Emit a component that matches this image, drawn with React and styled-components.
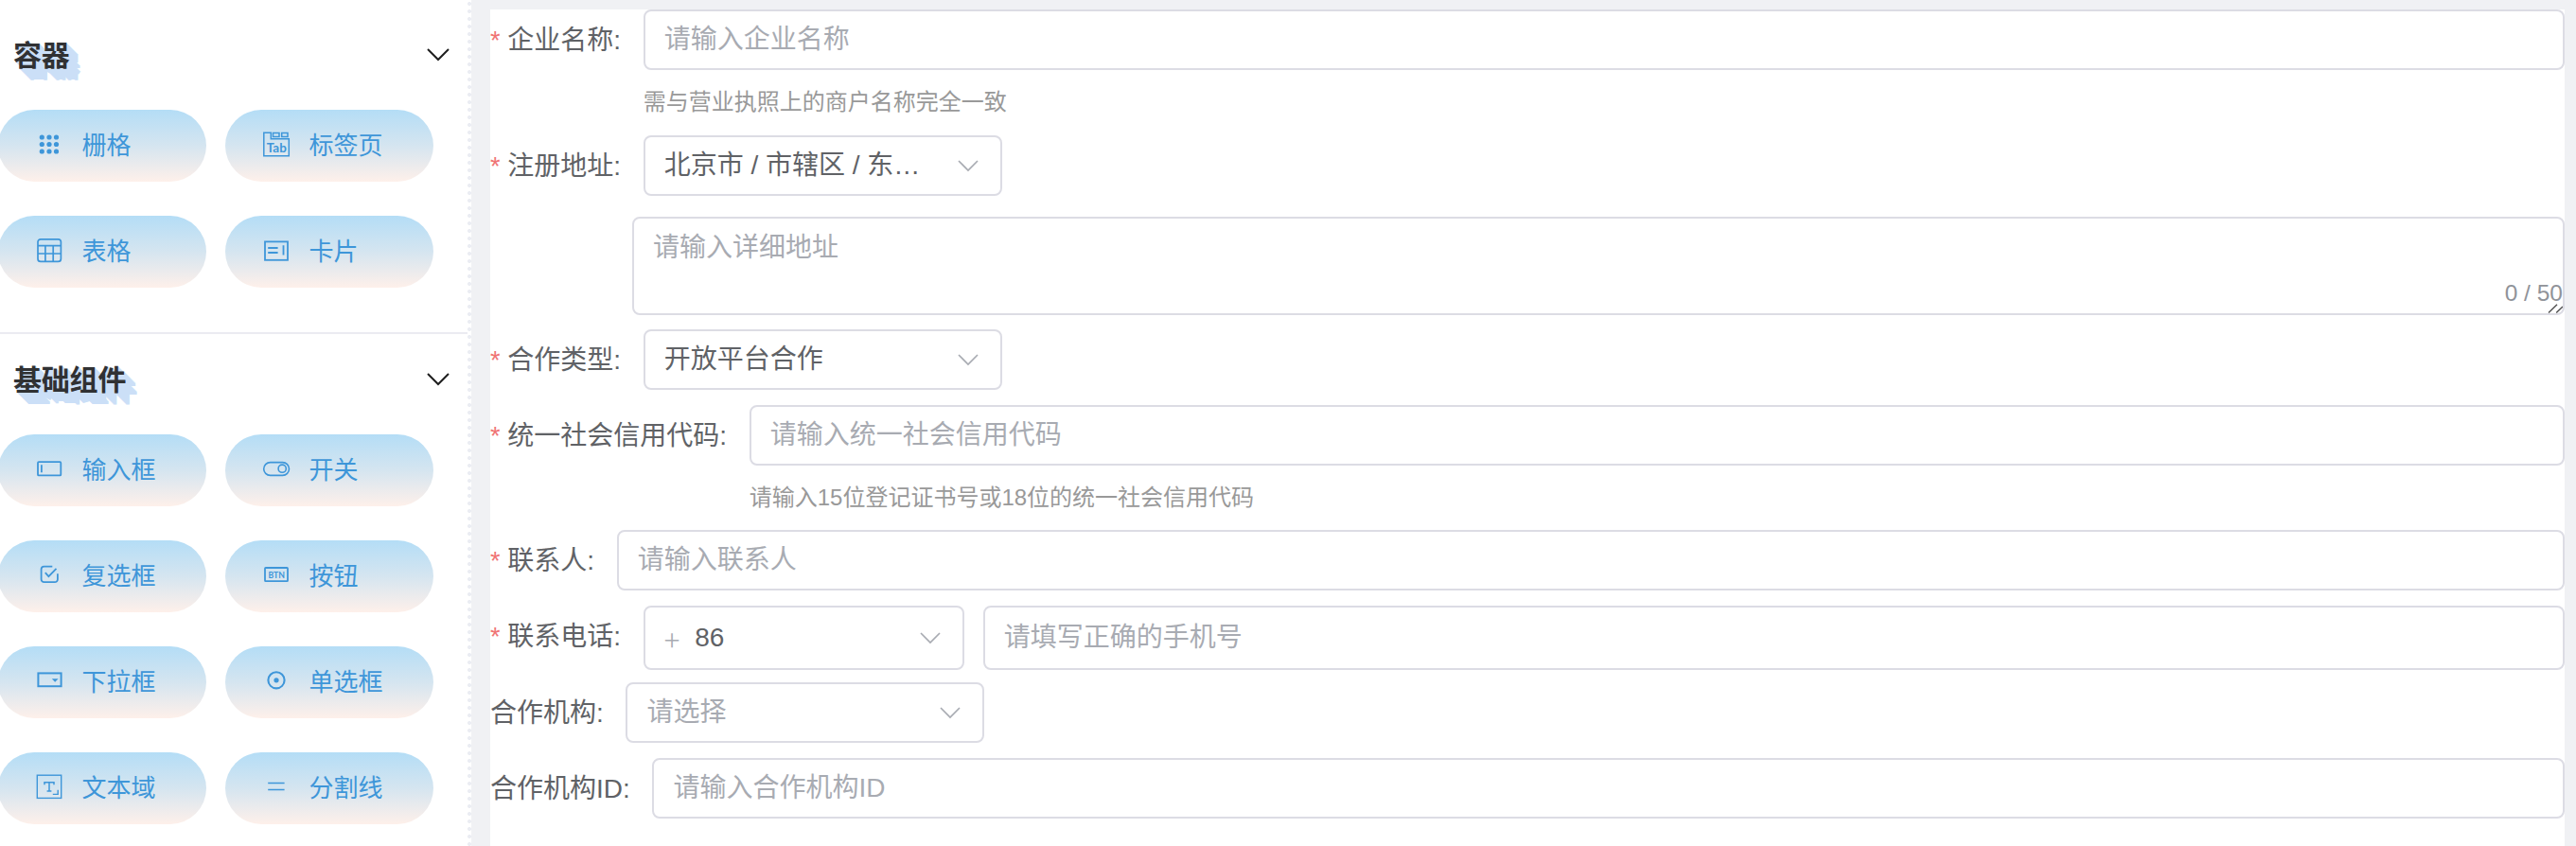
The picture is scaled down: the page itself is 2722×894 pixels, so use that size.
import React from 'react';
import styled, { createGlobalStyle } from 'styled-components';

const GlobalStyle = createGlobalStyle`
  * { box-sizing: border-box; }
  body {
    margin: 0;
    background: #f0f2f5;
    font-family: "Liberation Sans", "Noto Sans CJK SC", sans-serif;
    overflow: hidden;
  }
`;

const Page = styled.div`
  display: flex;
  height: 894px;
  overflow: hidden;
  background: #f0f1f4;
`;

/* ---------- component palette ---------- */

const Sidebar = styled.aside`
  display: flex;
  width: 498px;
  flex: none;
  background: #fff;
  overflow: hidden;
`;

const SidebarBody = styled.div`
  width: 494px;
  padding-top: 10px;
`;

const DottedEdge = styled.div`
  width: 4px;
  background: radial-gradient(circle at 2px 4px, #ebedf3 1.7px, transparent 2.3px) 0 0 / 4px 8px;
`;

const Section = styled.section`
  padding-bottom: 47px;
  border-bottom: 2px solid #ebebf1;
`;

const SectionHeader = styled.header`
  display: flex;
  align-items: center;
  justify-content: space-between;
  height: 96px;
  padding: 0 19px 0 14px;
`;

const SectionTitle = styled.h2`
  margin: 2px 0 0;
  font-size: 30px;
  line-height: 44px;
  font-weight: 700;
  letter-spacing: -0.2px;
  color: #303133;
  text-shadow: ${Array.from({ length: 12 }, (_, i) => `${i + 1}px ${i + 1}px #cbdff7`).join(', ')};
`;

const PillGrid = styled.div`
  display: grid;
  grid-template-columns: 220px 220px;
  gap: 36px 20px;
  margin: 10px 0 0 -2px;
`;

const Pill = styled.button`
  display: flex;
  align-items: center;
  height: 76px;
  padding: 0 0 0 38px;
  border: 0;
  border-radius: 38px;
  background: linear-gradient(to bottom, #b4ddf6, #d5e5f0 50%, #fef0ea);
  color: #3e96d9;
  font: 26px/38px "Liberation Sans", "Noto Sans CJK SC", sans-serif;
`;

const PillLabel = styled.span`
  margin-left: 18.5px;
`;

const IconBox = styled.svg`
  width: 32px;
  height: 32px;
  flex: none;
  margin-bottom: 2px;
  fill: none;
  stroke: currentColor;
  stroke-width: 1.8;
`;

const IconText = styled.text`
  fill: currentColor;
  stroke: none;
  font-family: "Lato", "Liberation Sans", sans-serif;
  font-weight: 700;
  font-size: ${(p) => p.$size}px;
`;

const ArrowSvg = styled.svg`
  width: ${(p) => p.$w}px;
  height: ${(p) => p.$w / 2 + 2}px;
  flex: none;
  fill: none;
  stroke: ${(p) => p.$color};
  stroke-width: ${(p) => p.$stroke};
`;

const Arrow = ({ w = 22, color = '#a8abb2', stroke = 1.7 }) => (
  <ArrowSvg $w={w} $color={color} $stroke={stroke} viewBox={`0 0 ${w} ${w / 2 + 2}`}>
    <path d={`M1 1 L${w / 2} ${w / 2} L${w - 1} 1`} />
  </ArrowSvg>
);

const icons = {
  grid: (
    <g fill="currentColor" stroke="none">
      {[8, 15.5, 23].map((y) => [8.3, 16, 23.5].map((x) => <circle key={`${x}-${y}`} cx={x} cy={y} r="2.6" />))}
    </g>
  ),
  tab: (
    <g strokeWidth="1.5">
      <path d="M2.8 3.2H10.3V9.7H29.3V27.8H2.8Z" />
      <path d="M12.5 3.5H19V7.5H12.5ZM21.7 3.5H28V7.5H21.7Z" />
      <IconText $size={12.8} x="5.8" y="24" textLength="21" lengthAdjust="spacingAndGlyphs">Tab</IconText>
    </g>
  ),
  table: (
    <g strokeWidth="1.7">
      <rect x="4" y="3.8" width="24.4" height="23.6" rx="3" />
      <path d="M4 10.7H28.4M4 19H28.4M11.9 10.7V27.4M20.2 10.7V27.4" />
    </g>
  ),
  card: (
    <>
      <rect x="4" y="6.4" width="24" height="19.4" />
      <path d="M7.2 13H17.6M7.2 18H17.6M23.5 10.3V20.5" />
    </>
  ),
  input: (
    <>
      <rect x="4" y="8.2" width="24.3" height="14.2" rx="1" />
      <path d="M7.9 11.3V19.2" />
    </>
  ),
  toggle: (
    <g strokeWidth="1.6">
      <rect x="2.7" y="8.6" width="26.8" height="13.8" rx="6.9" />
      <circle cx="22.2" cy="15.2" r="4.1" />
    </g>
  ),
  check: (
    <>
      <path d="M19.3 6.6H10.6A3 3 0 0 0 7.6 9.6V20.2A3 3 0 0 0 10.6 23.2H21.9A3 3 0 0 0 24.9 20.2V14.3" />
      <path d="M11.8 13.2L15.4 17.2L23.5 8.8" />
    </>
  ),
  button: (
    <>
      <rect x="4" y="8" width="24" height="14.2" rx="0.8" />
      <IconText $size={10.2} x="7.4" y="18.8" textLength="17.6" lengthAdjust="spacingAndGlyphs">BTN</IconText>
    </>
  ),
  select: (
    <>
      <rect x="4.4" y="7.4" width="24.2" height="13.8" strokeWidth="2" />
      <path d="M18.8 13.2H25.6L22.2 16.8Z" fill="currentColor" stroke="none" />
    </>
  ),
  radio: (
    <>
      <circle cx="16" cy="14.8" r="8.6" strokeWidth="2.1" />
      <circle cx="16" cy="14.8" r="2.6" fill="currentColor" stroke="none" />
    </>
  ),
  textarea: (
    <>
      <rect x="3.3" y="3.2" width="25.4" height="24.2" strokeWidth="1.4" />
      <path d="M19.8 23.4H25.2V18.7" strokeWidth="1.4" />
      <path d="M11 13.3V10.7H21V13.3M16 10.7V20M13.6 20H18.4" strokeWidth="1.5" />
    </>
  ),
  divider: <path d="M7.2 11.5H24.6M7.2 18.5H24.6" strokeWidth="1.3" />,
};

const Icon = ({ name }) => <IconBox viewBox="0 0 32 32">{icons[name]}</IconBox>;

const palette = [
  {
    title: '容器',
    items: [['grid', '栅格'], ['tab', '标签页'], ['table', '表格'], ['card', '卡片']],
  },
  {
    title: '基础组件',
    items: [
      ['input', '输入框'], ['toggle', '开关'],
      ['check', '复选框'], ['button', '按钮'],
      ['select', '下拉框'], ['radio', '单选框'],
      ['textarea', '文本域'], ['divider', '分割线'],
    ],
  },
];

/* ---------- form canvas ---------- */

const Canvas = styled.main`
  flex: 1;
  padding: 10px 12px 0 20px;
  min-width: 0;
`;

const Form = styled.form`
  height: 100%;
  background: #fff;
`;

const FormItem = styled.div`
  display: flex;
  margin-bottom: ${(p) => p.$gap}px;
`;

const Label = styled.label`
  flex: none;
  padding: 1px 23.6px 0 0;
  font-size: 28px;
  line-height: 64px;
  height: 64px;
  color: #606266;
  white-space: nowrap;
`;

const Required = styled.span`
  display: inline-block;
  width: 18.3px;
  padding-bottom: 1px;
  font-size: 27px;
  line-height: 40px;
  color: #f07474;
`;

const Content = styled.div`
  flex: 1;
  min-width: 0;
`;

const Field = styled.div`
  display: flex;
  align-items: center;
  width: ${(p) => (p.$w ? `${p.$w}px` : 'auto')};
  flex: ${(p) => (p.$w ? 'none' : '1')};
  height: ${(p) => p.$h || 64}px;
  padding: 0 23px 0 20px;
  border: 2px solid #dcdce4;
  border-radius: 8px;
  background: #fff;
  font-size: 28px;
  line-height: 40px;
  color: ${(p) => (p.$filled ? '#606266' : '#a8abb2')};
`;

const Value = styled.span`
  flex: 1;
  white-space: nowrap;
`;

const Prefix = styled.span`
  margin: 2px 16px 0 0;
  font-family: "Noto Sans CJK SC", sans-serif;
  font-size: 31px;
  font-weight: 300;
  color: #a8abb2;
`;

const FieldPair = styled.div`
  display: flex;
  gap: 20px;
`;

const Hint = styled.p`
  margin: 15px 0 0;
  font-size: 24px;
  line-height: 37px;
  color: #999;
`;

const AreaRow = styled.div`
  padding-left: 150px;
  margin: 0 0 15px;
`;

const Area = styled.div`
  position: relative;
  height: 104px;
  padding: 10px 20px;
  border: 2px solid #dcdce4;
  border-radius: 8px;
  font-size: 28px;
  line-height: 42px;
  color: #a8abb2;
`;

const Counter = styled.span`
  position: absolute;
  right: 0;
  bottom: 7px;
  font-size: 24.5px;
  line-height: 28px;
  color: #909399;
`;

const Grip = styled.svg`
  position: absolute;
  right: 0;
  bottom: 0;
  width: 16px;
  height: 10px;
  stroke: #555;
  stroke-width: 1.5;
`;

const Item = ({ label, required, gap = 16, children }) => (
  <FormItem $gap={gap}>
    <Label>
      {required && <Required>*</Required>}
      {label}:
    </Label>
    <Content>{children}</Content>
  </FormItem>
);

const Select = ({ value, filled, w = 379, h, prefix }) => (
  <Field $w={w} $h={h} $filled={filled}>
    {prefix && <Prefix>{prefix}</Prefix>}
    <Value>{value}</Value>
    <Arrow />
  </Field>
);

const Input = ({ placeholder, h }) => (
  <Field $h={h}>
    <Value>{placeholder}</Value>
  </Field>
);

export default function App() {
  return (
    <Page>
      <GlobalStyle />
      <Sidebar>
        <SidebarBody>
          {palette.map((s) => (
            <Section key={s.title}>
              <SectionHeader>
                <SectionTitle>{s.title}</SectionTitle>
                <Arrow w={24} color="#1f1f1f" stroke={2} />
              </SectionHeader>
              <PillGrid>
                {s.items.map(([icon, text]) => (
                  <Pill key={text} type="button">
                    <Icon name={icon} />
                    <PillLabel>{text}</PillLabel>
                  </Pill>
                ))}
              </PillGrid>
            </Section>
          ))}
        </SidebarBody>
        <DottedEdge />
      </Sidebar>
      <Canvas>
        <Form>
          <Item label="企业名称" required gap={17}>
            <Input placeholder="请输入企业名称" />
            <Hint>需与营业执照上的商户名称完全一致</Hint>
          </Item>
          <Item label="注册地址" required gap={22}>
            <Select value="北京市 / 市辖区 / 东…" filled />
          </Item>
          <AreaRow>
            <Area>
              请输入详细地址
              <Counter>0 / 50</Counter>
              <Grip viewBox="0 0 16 10">
                <path d="M1 9.5L10 0.8M9.2 9.5L16 3" />
              </Grip>
            </Area>
          </AreaRow>
          <Item label="合作类型" required>
            <Select value="开放平台合作" filled />
          </Item>
          <Item label="统一社会信用代码" required>
            <Input placeholder="请输入统一社会信用代码" />
            <Hint>请输入15位登记证书号或18位的统一社会信用代码</Hint>
          </Item>
          <Item label="联系人" required>
            <Input placeholder="请输入联系人" />
          </Item>
          <Item label="联系电话" required gap={13}>
            <FieldPair>
              <Select value="86" filled w={339} h={68} prefix="+" />
              <Input placeholder="请填写正确的手机号" h={68} />
            </FieldPair>
          </Item>
          <Item label="合作机构">
            <Select value="请选择" />
          </Item>
          <Item label="合作机构ID">
            <Input placeholder="请输入合作机构ID" />
          </Item>
        </Form>
      </Canvas>
    </Page>
  );
}
